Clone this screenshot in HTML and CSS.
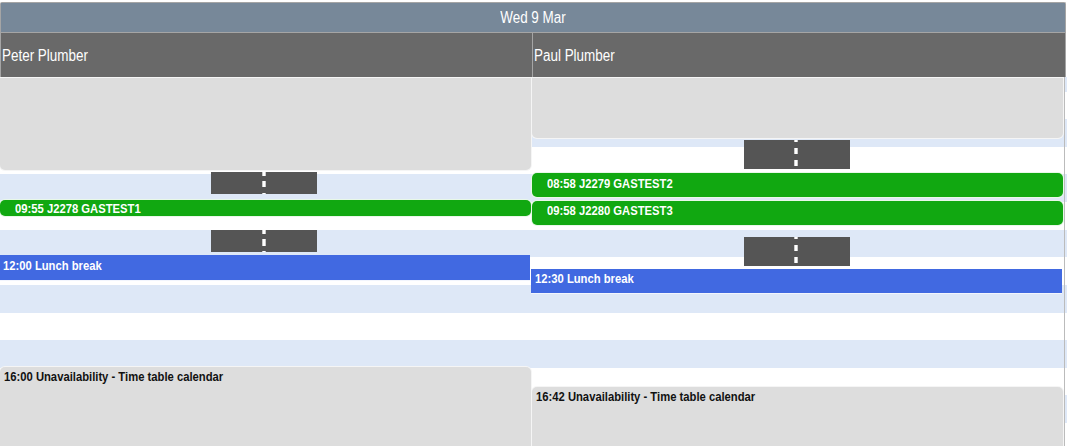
FILE: index.html
```
<!DOCTYPE html>
<html>
<head>
  <meta charset="UTF-8">
  <title>Calendar</title>
  <link rel="stylesheet" href="styles.css">
</head>
<body>
  <div class="calendar">
    <header>
      <div class="date"><span class="label">Wed 9 Mar</span></div>
      <div class="names">
        <div class="name"><span class="label">Peter Plumber</span></div>
        <div class="name"><span class="label">Paul Plumber</span></div>
      </div>
    </header>
    <div class="schedule">
      <div class="column peter">
        <div class="event unavailable morning"></div>
        <div class="travel">
          <svg width="106" height="22"><path d="M53 0V4M53 9V15M53 21V22"/></svg>
        </div>
        <div class="event job short"><span class="text">09:55 J2278 GASTEST1</span></div>
        <div class="travel second">
          <svg width="106" height="22"><path d="M53 0V4M53 9V16M53 21V22"/></svg>
        </div>
        <div class="event lunch"><span class="text">12:00 Lunch break</span></div>
        <div class="event unavailable evening"><span class="text">16:00 Unavailability - Time table calendar</span></div>
      </div>
      <div class="column paul">
        <div class="event unavailable morning"></div>
        <div class="travel">
          <svg width="106" height="29"><path d="M52 0V2M52 8V14M52 20V26"/></svg>
        </div>
        <div class="event job"><span class="text">08:58 J2279 GASTEST2</span></div>
        <div class="event job next"><span class="text">09:58 J2280 GASTEST3</span></div>
        <div class="travel second">
          <svg width="106" height="29"><path d="M52 0V2M52 8V14M52 20V26"/></svg>
        </div>
        <div class="event lunch"><span class="text">12:30 Lunch break</span></div>
        <div class="event unavailable evening"><span class="text">16:42 Unavailability - Time table calendar</span></div>
      </div>
      <div class="edge"></div>
    </div>
  </div>
</body>
</html>
```
FILE: styles.css
```
body {
  margin: 0;
  padding: 2px 0 0;
  overflow: hidden;
  background-color: #fff;
  font-family: "Liberation Sans", Arial, sans-serif;
}

.calendar {
  height: 444px;
  overflow: hidden;
}

header {
  box-sizing: border-box;
  width: 1066px;
  height: 75px;
  border: 1px solid #a5a5a5;
  border-bottom: none;
  border-radius: 2px 2px 0 0;
  color: #fff;
  font-size: 16px;
}

.date {
  height: 29px;
  line-height: 29px;
  text-align: center;
  background-color: #778899;
  border-bottom: 1px solid #a5a5a5;
}

.label {
  display: inline-block;
  transform: scaleX(0.84);
}

.names {
  display: flex;
  height: 44px;
}

.name {
  box-sizing: border-box;
  width: 531px;
  padding-left: 1px;
  line-height: 45px;
  background-color: #696969;
}

.name + .name {
  width: 533px;
  border-left: 1px solid #a5a5a5;
}

.name .label {
  transform-origin: left;
}

/* half hour stripes */
.schedule {
  display: flex;
  height: 369px;
  background: repeating-linear-gradient(#dee8f7 0, #dee8f7 14.8px, #fff 14.8px, #fff 42.2px, #dee8f7 42.2px, #dee8f7 55.2px);
}

.column {
  display: flex;
  flex-direction: column;
  width: 531px;
}

.paul {
  width: 532px;
  margin-left: 1px;
}

.event {
  box-sizing: border-box;
  flex-shrink: 0;
  width: 531px;
  font-size: 13px;
  font-weight: bold;
  line-height: 15px;
  white-space: nowrap;
}

.text {
  display: block;
  transform: scaleX(0.865);
  transform-origin: left;
}

.unavailable {
  background-color: #ddd;
  color: #111;
  box-shadow: 0 0 0 1px #f5f5f5;
}

.morning {
  height: 92px;
  margin-top: 1px;
  border-radius: 0 0 5px 5px;
}

.paul .morning {
  height: 60px;
}

.evening {
  height: 80px;
  margin-top: 87px;
  padding: 2px 0 0 4px;
  border-radius: 5px 5px 0 0;
}

.paul .evening {
  height: 60px;
  margin-top: 94px;
}

.travel {
  align-self: flex-start;
  height: 22px;
  margin: 2px 0 0 211px;
  background-color: #555;
}

.travel svg {
  display: block;
}

.travel path {
  stroke: #fff;
  stroke-width: 3.4;
}

.travel.second {
  margin-top: 14px;
}

.paul .travel {
  height: 29px;
  margin-left: 212px;
}

.paul .travel.second {
  margin-top: 12px;
}

.job {
  height: 24px;
  margin-top: 4px;
  padding: 3px 0 0 15px;
  background-color: #11a811;
  border-radius: 5px;
  color: #fff;
  box-shadow: 0 0 0 1px #e8f8e8;
}

.job.short {
  height: 16px;
  margin-top: 6px;
  padding-top: 1px;
}

.job.next {
  margin-top: 4px;
  padding-top: 2px;
}

.lunch {
  height: 25px;
  margin-top: 3px;
  padding: 3px 0 0 3px;
  background-color: #4169e1;
  color: #fff;
  box-shadow: 0 1px 0 #f2f5fd;
}

.peter .lunch {
  width: 530px;
}

.paul .lunch {
  height: 24px;
  margin-left: -1px;
  padding: 2px 0 0 4px;
}

/* right border of the grid */
.edge {
  width: 1px;
  background-color: #bbb;
}
```
